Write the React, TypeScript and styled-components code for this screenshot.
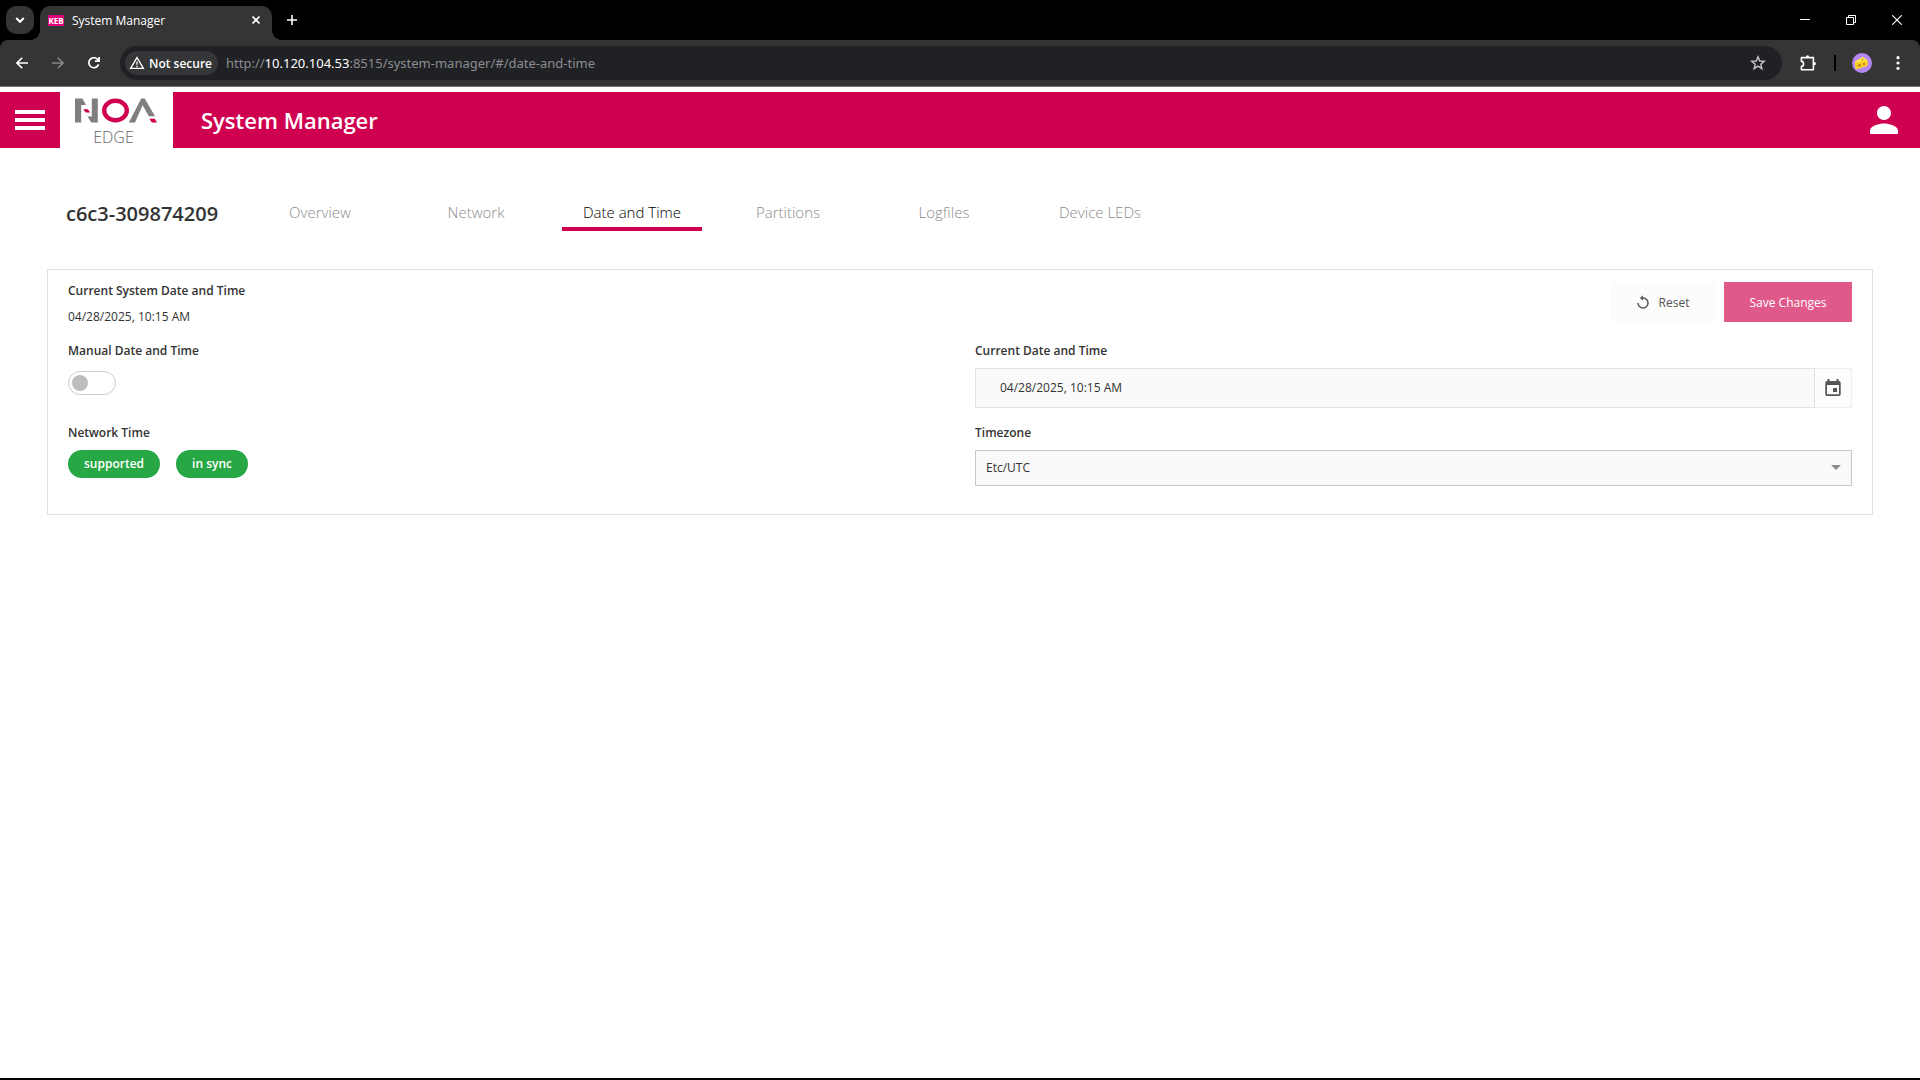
import React, { useState } from "react";
import styled, { createGlobalStyle } from "styled-components";

const uiFont = `"Open Sans", "Noto Sans", sans-serif`;
const urlFont = `"Noto Sans", "Open Sans", sans-serif`;
const brand = "#cf004f";

const GlobalStyle = createGlobalStyle`
  * { box-sizing: border-box; }
  body { margin: 0; background: #fff; font-family: ${uiFont}; color: #333; }
  button, input, select { font: inherit; color: inherit; margin: 0; }
  button { border: 0; padding: 0; background: none; cursor: pointer; }
  svg { display: block; flex: none; }
`;

const Window = styled.div`
  display: flex;
  flex-direction: column;
  min-height: 100vh;
  border-bottom: 2px solid #000;
`;

const TabStrip = styled.div`
  display: flex;
  align-items: flex-start;
  height: 40px;
  padding-left: 6px;
  background: #000;
  color: #fff;
`;

const TabSearch = styled.button`
  display: grid;
  place-items: center;
  width: 28px;
  height: 28px;
  margin: 6px 6px 0 0;
  border-radius: 10px;
  background: #353535;
`;

const BrowserTab = styled.div`
  position: relative;
  display: flex;
  align-items: center;
  gap: 8px;
  width: 232px;
  height: 34px;
  margin-top: 6px;
  padding: 0 8px 6px;
  border-radius: 10px 10px 0 0;
  background: #353535;
  font-size: 12px;

  &::before,
  &::after {
    content: "";
    position: absolute;
    bottom: 0;
    width: 10px;
    height: 10px;
  }
  &::before {
    left: -10px;
    background: radial-gradient(circle at 0 0, #000 10px, #353535 10px);
  }
  &::after {
    right: -10px;
    background: radial-gradient(circle at 100% 0, #000 10px, #353535 10px);
  }
`;

const Favicon = styled.span`
  width: 16px;
  height: 11px;
  background: #e2007a;
  color: #fff;
  font-size: 8px;
  font-weight: 700;
  line-height: 11px;
  text-align: center;
`;

const TabTitle = styled.span`
  flex: 1;
  white-space: nowrap;
`;

const StripButton = styled.button<{ $w: number; $h: number }>`
  display: grid;
  place-items: center;
  width: ${(p) => p.$w}px;
  height: ${(p) => p.$h}px;
`;

const NewTab = styled(StripButton)`
  margin: 6px auto 0 6px;
`;

const ToolbarBack = styled.div`
  background: #000;
`;

const Toolbar = styled.div`
  display: flex;
  align-items: center;
  gap: 8px;
  height: 47px;
  padding: 0 4px;
  background: #353535;
  border-bottom: 1px solid #747474;
  border-radius: 8px 8px 0 0;
  color: #fff;
`;

const NavButtons = styled.div`
  display: flex;
`;

const ToolButton = styled.button`
  display: grid;
  place-items: center;
  width: 36px;
  height: 34px;
`;

const AddressBar = styled.div`
  display: flex;
  flex: 1;
  align-items: center;
  height: 34px;
  padding: 0 6px 0 5px;
  border-radius: 17px;
  background: #202124;
`;

const Security = styled.button`
  display: flex;
  align-items: center;
  gap: 4px;
  height: 24px;
  margin-right: 8px;
  padding: 0 6px 0 4px;
  border-radius: 12px;
  background: #353638;
  font-size: 12px;
  font-weight: 600;
  white-space: nowrap;
`;

const Url = styled.span`
  flex: 1;
  color: #8b8d90;
  font-family: ${urlFont};
  font-size: 13px;
  white-space: nowrap;
`;

const UrlHost = styled.span`
  color: #fff;
`;

const Divider = styled.span`
  width: 2px;
  height: 16px;
  background: #000;
`;

const AppHeader = styled.header`
  display: flex;
  align-items: stretch;
  height: 56px;
  margin-top: 5px;
  background: ${brand};
  color: #fff;
`;

const MenuButton = styled.button`
  display: flex;
  flex-direction: column;
  justify-content: center;
  gap: 4px;
  width: 60px;
  padding: 0 15px;
`;

const MenuLine = styled.span`
  height: 4px;
  background: #fff;
`;

const Logo = styled.a`
  display: flex;
  flex-direction: column;
  align-items: center;
  width: 113px;
  padding: 6px 2px 0 0;
  background: #fff;
  color: #666;
  font-size: 16px;
  font-weight: 300;
  line-height: 16px;
  text-decoration: none;
`;

const LogoName = styled.span`
  margin-top: 6px;
  padding-right: 4px;
`;

const AppTitle = styled.h1`
  flex: 1;
  margin: 0;
  padding-left: 28px;
  font-size: 22px;
  font-weight: 600;
  line-height: 56px;
`;

const UserButton = styled.button`
  display: grid;
  place-items: center;
  width: 72px;
`;

const Page = styled.main`
  flex: 1;
  padding: 46px 47px;
`;

const DeviceNav = styled.nav`
  display: flex;
  align-items: center;
  height: 37px;
  margin-bottom: 38px;
`;

const DeviceName = styled.h2`
  width: 203px;
  margin: 0;
  padding: 2px 0 0 19px;
  font-size: 20px;
  font-weight: 600;
  line-height: 37px;
`;

const NavTabs = styled.div`
  display: flex;
  gap: 16px;
`;

const NavTab = styled.a<{ $active?: boolean }>`
  width: 140px;
  height: 37px;
  border-bottom: 4px solid ${(p) => (p.$active ? brand : "transparent")};
  color: ${(p) => (p.$active ? "#000" : "#8c8c8c")};
  font-size: 15px;
  font-weight: 300;
  line-height: 37px;
  text-align: center;
  text-decoration: none;
`;

const Card = styled.section`
  display: grid;
  grid-template-columns: 1fr 1fr;
  column-gap: 30px;
  padding: 12px 20px 28px;
  border: 1px solid #e0e0e0;
  font-size: 12px;
`;

const Cell = styled.div<{ $h?: number }>`
  display: flex;
  flex-direction: column;
  align-items: stretch;
  min-height: ${(p) => p.$h ?? 0}px;
`;

const labelText = `
  font-size: 12px;
  font-weight: 600;
  line-height: 18px;
`;

const Label = styled.label`
  ${labelText}
  margin-bottom: 8px;
`;

const Heading = styled.h3`
  ${labelText}
  margin: 0 0 8px;
`;

const Value = styled.span`
  line-height: 18px;
`;

const Actions = styled.div`
  display: flex;
  justify-content: flex-end;
  gap: 8px;
`;

const ActionButton = styled.button<{ $primary?: boolean }>`
  display: flex;
  align-items: center;
  justify-content: center;
  gap: 10px;
  width: ${(p) => (p.$primary ? 128 : 106)}px;
  height: 40px;
  background: ${(p) => (p.$primary ? "#e0598b" : "#fcfcfc")};
  color: ${(p) => (p.$primary ? "#fff" : "#555")};
`;

const Switch = styled.input`
  appearance: none;
  width: 48px;
  height: 24px;
  margin-top: 3px;
  padding: 3px;
  border: 1px solid #ccc;
  border-radius: 12px;
  background: #fff;

  &::before {
    content: "";
    display: block;
    width: 16px;
    height: 16px;
    border-radius: 50%;
    background: #bdbdbd;
  }
  &:checked::before {
    margin-left: auto;
    background: ${brand};
  }
`;

const Pills = styled.div`
  display: flex;
  gap: 16px;
`;

const Pill = styled.span`
  padding: 0 16px;
  border-radius: 14px;
  background: #28a745;
  color: #fff;
  font-weight: 600;
  line-height: 28px;
`;

const DateField = styled.div`
  display: flex;
  height: 40px;
`;

const DateInput = styled.input`
  flex: 1;
  min-width: 0;
  padding: 0 24px 2px;
  border: 1px solid #e4e4e4;
  border-radius: 0;
  background: #fafafa;
`;

const DateButton = styled.button`
  display: grid;
  place-items: center;
  width: 37px;
  padding-bottom: 2px;
  border: 1px solid #eee;
  border-left: 0;
  background: #fcfcfc;
`;

const SelectBox = styled.div`
  position: relative;
  display: grid;

  svg {
    position: absolute;
    top: 15px;
    right: 11px;
    pointer-events: none;
  }
`;

const Select = styled.select`
  appearance: none;
  height: 36px;
  padding: 0 28px 2px 10px;
  border: 1px solid #c8c8c8;
  border-radius: 0;
  background: #f9f9f9;
`;

const tabs = ["Overview", "Network", "Date and Time", "Partitions", "Logfiles", "Device LEDs"];

function Chrome() {
  return (
    <>
      <TabStrip>
        <TabSearch aria-label="Search tabs">
          <svg width="10" height="8" viewBox="0 0 10 8" fill="none" stroke="#fff" strokeWidth="2">
            <path d="M1.2 2 5 5.8 8.8 2" />
          </svg>
        </TabSearch>
        <BrowserTab>
          <Favicon>KEB</Favicon>
          <TabTitle>System Manager</TabTitle>
          <StripButton $w={16} $h={16} aria-label="Close tab">
            <svg width="8" height="8" viewBox="0 0 8 8" stroke="#fff" strokeWidth="1.6">
              <path d="M.5.5l7 7M7.5.5l-7 7" />
            </svg>
          </StripButton>
        </BrowserTab>
        <NewTab $w={28} $h={28} aria-label="New tab">
          <svg width="10" height="10" viewBox="0 0 10 10" stroke="#fff" strokeWidth="1.6">
            <path d="M5 0v10M0 5h10" />
          </svg>
        </NewTab>
        <StripButton $w={46} $h={40} aria-label="Minimize">
          <svg width="10" height="10" viewBox="0 0 10 10">
            <path d="M0 4h10v1H0z" fill="#fff" />
          </svg>
        </StripButton>
        <StripButton $w={46} $h={40} aria-label="Restore">
          <svg width="10" height="10" viewBox="0 0 10 10" fill="none" stroke="#fff">
            <path d="M.5 2.5h7v7h-7zM2.5 2.5v-2h7v7h-2" />
          </svg>
        </StripButton>
        <StripButton $w={46} $h={40} aria-label="Close">
          <svg width="10" height="10" viewBox="0 0 10 10" stroke="#fff" strokeWidth="1.2">
            <path d="M.3.3l9.4 9.4M9.7.3.3 9.7" />
          </svg>
        </StripButton>
      </TabStrip>
      <ToolbarBack>
        <Toolbar>
          <NavButtons>
            <ToolButton aria-label="Back">
              <svg width="12" height="12" viewBox="0 0 12 12" fill="none" stroke="#fff" strokeWidth="1.6">
                <path d="M12 6H1.2M6.2.8 1 6l5.2 5.2" />
              </svg>
            </ToolButton>
            <ToolButton aria-label="Forward">
              <svg width="12" height="12" viewBox="0 0 12 12" fill="none" stroke="#868686" strokeWidth="1.6">
                <path d="M0 6h10.8M5.8.8 11 6l-5.2 5.2" />
              </svg>
            </ToolButton>
            <ToolButton aria-label="Reload">
              <svg width="12" height="12" viewBox="0 0 12 12" fill="none" stroke="#fff" strokeWidth="1.7">
                <path d="M10.6 7.4A5 5 0 1 1 9.6 2.4l1.2 1.4M11.1 0v4.2H6.9" />
              </svg>
            </ToolButton>
          </NavButtons>
          <AddressBar>
            <Security>
              <svg width="16" height="14" viewBox="0 0 16 14" fill="none" stroke="#fff" strokeWidth="1.3">
                <path d="M8 1.6 14.4 12.4H1.6z" />
                <path d="M8 5.4v3.4M8 9.8v1.4" />
              </svg>
              Not secure
            </Security>
            <Url>
              http://<UrlHost>10.120.104.53</UrlHost>:8515/system-manager/#/date-and-time
            </Url>
            <ToolButton aria-label="Bookmark this tab">
              <svg width="16" height="16" viewBox="0 0 16 16" fill="none" stroke="#c7c7c7" strokeWidth="1.4">
                <path d="M8 1.8 9.7 6l4.6.3-3.5 2.9 1.1 4.5L8 11.2l-3.9 2.5 1.1-4.5L1.7 6.3 6.3 6z" />
              </svg>
            </ToolButton>
          </AddressBar>
          <ToolButton aria-label="Extensions">
            <svg width="16" height="16" viewBox="0 0 16 16" fill="none" stroke="#fff" strokeWidth="1.6">
              <path d="M1.400 2.600h12v12.200h-12v-3.400c2.800 0 3-4.800 0-5z" strokeLinejoin="round" />
              <path d="M6 2.200a1.600 2 0 0 1 3.200 0zM14 7.100a2 1.600 0 0 1 0 3.200z" fill="#fff" stroke="none" />
            </svg>
          </ToolButton>
          <Divider />
          <NavButtons>
            <ToolButton aria-label="Profile">
              <svg width="20" height="20" viewBox="0 0 20 20">
                <circle cx="10" cy="10" r="10" fill="#b388f5" />
                <path d="M3 8.5 10.8 4l4.8 3.4-.3 5.4L5 16.2 3 14.6z" fill="#fdd835" />
                <path d="M3 8.5 10.8 4l4.8 3.4L3.8 10z" fill="#ffe44d" />
                <path d="M3.4 10 15.600 7.400l-.3 5.400L4 16z" fill="#f9cb25" />
                <circle cx="7.400" cy="12.400" r="1.200" fill="#a87412" />
                <circle cx="12" cy="11" r="1" fill="#a87412" />
                <circle cx="10.600" cy="6.600" r=".9" fill="#c08a18" />
              </svg>
            </ToolButton>
            <ToolButton aria-label="Menu">
              <svg width="4" height="14" viewBox="0 0 4 14" fill="#fff">
                <circle cx="2" cy="1.7" r="1.6" />
                <circle cx="2" cy="7" r="1.6" />
                <circle cx="2" cy="12.3" r="1.6" />
              </svg>
            </ToolButton>
          </NavButtons>
        </Toolbar>
      </ToolbarBack>
    </>
  );
}

function Header() {
  return (
    <AppHeader>
      <MenuButton aria-label="Open menu">
        <MenuLine />
        <MenuLine />
        <MenuLine />
      </MenuButton>
      <Logo href="#/">
        <svg width="82" height="25" viewBox="0 0 82 25">
          <path d="M0 .5h7.5l3.500 6.500H6.200V24.500H0z" fill="#7f7f7f" />
          <path d="M16.800.5h6V24.500h-6.600l-3.600-6h4.200z" fill="#7f7f7f" />
          <path d="M8.200 11.200h4.600l2.400 3.300h-4.600z" fill={brand} />
          <ellipse cx="40.500" cy="12.500" rx="11.300" ry="9.800" fill="none" stroke={brand} strokeWidth="4.400" />
          <path d="M66.300.5h3.400L80 18.300h-6.100L67.600 7.200 60 24.500h-6.200z" fill="#7f7f7f" />
          <path d="M74.400 20.800h5.400l2.200 3.700h-5.200z" fill={brand} />
        </svg>
        <LogoName>EDGE</LogoName>
      </Logo>
      <AppTitle>System Manager</AppTitle>
      <UserButton aria-label="Account">
        <svg width="28" height="28" viewBox="4 4 16 16" fill="#fff">
          <path d="M12 12c2.2 0 4-1.8 4-4s-1.8-4-4-4-4 1.8-4 4 1.8 4 4 4zm0 2c-2.7 0-8 1.3-8 4v2h16v-2c0-2.7-5.3-4-8-4z" />
        </svg>
      </UserButton>
    </AppHeader>
  );
}

export default function App() {
  const [manual, setManual] = useState(false);
  return (
    <Window>
      <GlobalStyle />
      <Chrome />
      <Header />
      <Page>
        <DeviceNav>
          <DeviceName>c6c3-309874209</DeviceName>
          <NavTabs>
            {tabs.map((t) => (
              <NavTab key={t} href={`#/${t.toLowerCase().replace(/ /g, "-")}`} $active={t === "Date and Time"}>
                {t}
              </NavTab>
            ))}
          </NavTabs>
        </DeviceNav>
        <Card>
          <Cell $h={60}>
            <Heading>Current System Date and Time</Heading>
            <Value>04/28/2025, 10:15 AM</Value>
          </Cell>
          <Actions>
            <ActionButton>
              <svg width="12" height="14" viewBox="0 0 12 14" fill="none" stroke="#555" strokeWidth="1.5">
                <path d="M1 8a5 5 0 1 0 5-5H4" />
                <path d="M5.8.2v5.6L3 3z" fill="#555" stroke="none" />
              </svg>
              Reset
            </ActionButton>
            <ActionButton $primary>Save Changes</ActionButton>
          </Actions>
          <Cell $h={82}>
            <Label htmlFor="manual">Manual Date and Time</Label>
            <Switch
              id="manual"
              type="checkbox"
              role="switch"
              checked={manual}
              onChange={(e) => setManual(e.target.checked)}
            />
          </Cell>
          <Cell>
            <Label htmlFor="current">Current Date and Time</Label>
            <DateField>
              <DateInput id="current" type="text" defaultValue="04/28/2025, 10:15 AM" />
              <DateButton aria-label="Choose date">
                <svg width="16" height="17" viewBox="0 0 16 17" fill="#555">
                  <path d="M2.5 0h2v2h7V0h2v2H14a1.7 1.7 0 0 1 1.7 1.7v11.6A1.7 1.7 0 0 1 14 17H2A1.7 1.7 0 0 1 .3 15.3V3.7A1.7 1.7 0 0 1 2 2h.5zM2 6v9.3h12V6z" fillRule="evenodd" />
                  <path d="M8 9h4v4H8z" />
                </svg>
              </DateButton>
            </DateField>
          </Cell>
          <Cell>
            <Heading>Network Time</Heading>
            <Pills>
              <Pill>supported</Pill>
              <Pill>in sync</Pill>
            </Pills>
          </Cell>
          <Cell>
            <Label htmlFor="zone">Timezone</Label>
            <SelectBox>
              <Select id="zone" defaultValue="Etc/UTC">
                <option>Etc/UTC</option>
              </Select>
              <svg width="10" height="5" viewBox="0 0 10 5">
                <path d="M0 0h10L5 5z" fill="#8c8c8c" />
              </svg>
            </SelectBox>
          </Cell>
        </Card>
      </Page>
    </Window>
  );
}
